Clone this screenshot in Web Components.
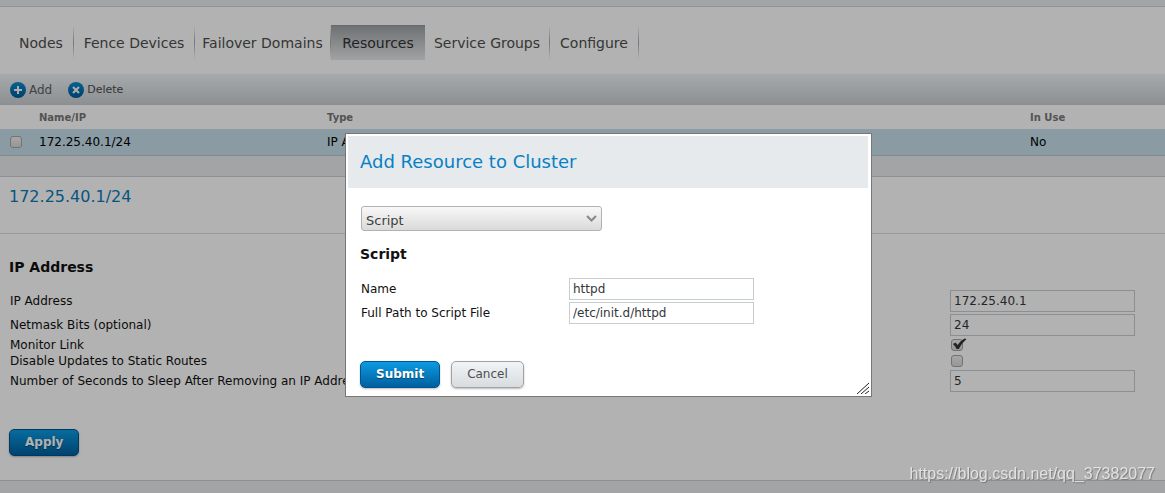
<!DOCTYPE html>
<html lang="en">
<head>
<meta charset="utf-8">
<title>Cluster Resources</title>
<style>
  html, body { height: 100%; }
  body { margin: 0; background: #fff; color: #111; font: 12px/16px "DejaVu Sans", sans-serif; }
</style>
</head>
<body>
<cluster-page>
  <tab-bar slot="nav">
    <nav-tab>Nodes</nav-tab>
    <nav-tab>Fence Devices</nav-tab>
    <nav-tab>Failover Domains</nav-tab>
    <nav-tab active>Resources</nav-tab>
    <nav-tab>Service Groups</nav-tab>
    <nav-tab>Configure</nav-tab>
  </tab-bar>
  <tool-bar slot="tools">
    <tool-button icon="add">Add</tool-button>
    <tool-button icon="delete">Delete</tool-button>
  </tool-bar>
  <resource-table slot="table"></resource-table>
  <resource-details slot="details">
    <span slot="title">172.25.40.1/24</span>
    <span slot="heading">IP Address</span>
    <text-field value="172.25.40.1">IP Address</text-field>
    <text-field value="24">Netmask Bits (optional)</text-field>
    <check-field checked>Monitor Link</check-field>
    <check-field>Disable Updates to Static Routes</check-field>
    <text-field value="5">Number of Seconds to Sleep After Removing an IP Address</text-field>
    <push-button slot="action" kind="primary">Apply</push-button>
  </resource-details>
</cluster-page>
<modal-layer>
  <resource-dialog>
    <span slot="title">Add Resource to Cluster</span>
    <select-box slot="type" label="Resource type" value="Script"></select-box>
    <span slot="heading">Script</span>
    <text-field value="httpd">Name</text-field>
    <text-field value="/etc/init.d/httpd">Full Path to Script File</text-field>
    <push-button slot="action" kind="primary">Submit</push-button>
    <push-button slot="action">Cancel</push-button>
  </resource-dialog>
</modal-layer>
<page-mark>https://blog.csdn.net/qq_37382077</page-mark>

<script>
const define = (name, render) => customElements.define(name, class extends HTMLElement {
  constructor() {
    super();
    this.attachShadow({ mode: "open" });
  }
  connectedCallback() {
    if (this.shadowRoot.firstChild) return;
    const t = document.createElement("template");
    t.innerHTML = render(this);
    this.shadowRoot.append(t.content.cloneNode(true));
  }
});

define("cluster-page", () => `
  <style>
    :host { display: flex; flex-direction: column; min-height: 100%; }
    .band { background: #e9ebee; box-sizing: border-box; }
    .top { height: 7px; border-bottom: 1px solid #cbd6dc; }
    .bottom { flex: 1; min-height: 12px; border-top: 1px solid #cbd0d3; }
  </style>
  <div class="band top"></div>
  <slot name="nav"></slot>
  <slot name="tools"></slot>
  <slot name="table"></slot>
  <slot name="details"></slot>
  <div class="band bottom"></div>`);

define("tab-bar", () => `
  <style>
    :host { display: block; padding: 18px 9px 14px; }
    nav { display: grid; grid-template-columns: 65px 121px 136px 94px 125px 89px; }
  </style>
  <nav aria-label="Cluster"><slot></slot></nav>`);

define("nav-tab", () => `
  <style>
    :host { display: flex; height: 35px; }
    a { flex: 1; text-align: center; font-size: 14px; line-height: 36px; color: #4e4e4e; text-decoration: none; white-space: nowrap; }
    i { width: 1px; background: linear-gradient(#fff, #a5aaac 50%, #fff); }
    :host([active]) a { color: #303233; background: linear-gradient(#9da1a4, #e6e9eb); box-shadow: inset 0 1px #94989a; }
    :host([active]) i { display: none; }
  </style>
  <a href="#"><slot></slot></a><i></i>`);

define("tool-bar", () => `
  <style>
    :host { display: flex; align-items: center; gap: 15px; height: 28px; padding: 2px 9px 0; border-bottom: 1px solid #c8cccf; background: linear-gradient(#eef4f7, #cbcfd2); }
  </style>
  <slot></slot>`);

define("tool-button", el => `
  <style>
    :host { display: block; }
    button { display: flex; align-items: center; gap: 2px; padding: 0; border: 0; background: none; font: 12px/18px "DejaVu Sans", sans-serif; color: #5c6062; }
    svg { display: block; width: 18px; height: 18px; }
    :host([icon=delete]) button { font-size: 11px; color: #4a4d4f; }
  </style>
  <button type="button">
    <svg viewBox="0 0 18 18" aria-hidden="true">
      <defs><linearGradient id="g" x2="0" y2="1"><stop stop-color="#0b8cce"/><stop offset="1" stop-color="#005a98"/></linearGradient></defs>
      <circle cx="9" cy="9" r="8" fill="url(#g)"/>
      <path d="${el.getAttribute("icon") === "add" ? "M9 5v8M5 9h8" : "M6 6l6 6M12 6l-6 6"}" stroke="#f5f8fa" stroke-width="2"/>
    </svg>
    <slot></slot>
  </button>`);

const tickBox = `
  .tick { position: relative; display: block; width: 12px; height: 12px; }
  .tick input { appearance: none; display: block; box-sizing: border-box; width: 12px; height: 12px; margin: 0; border: 1px solid #a4a4a4; border-radius: 3px; background: linear-gradient(#efefef, #d8d8d8); }
  .tick svg { position: absolute; left: 1px; top: -1px; display: none; pointer-events: none; }
  .tick input:checked + svg { display: block; }`;

define("resource-table", () => `
  <style>
    :host { display: block; border-bottom: 1px solid #cbd0d3; background: #e9ebee; padding-bottom: 20px; }
    table { width: 100%; border-collapse: separate; border-spacing: 0; table-layout: fixed; background: #fff; }
    th, td { padding: 0; text-align: left; }
    th { height: 22px; padding-top: 2px; font-size: 10px; line-height: 16px; color: #777; }
    td { height: 26px; background: #c6deeb; border-bottom: 1px solid #bac5cb; color: #000; }
    .pick { width: 39px; } .name { width: 288px; } .use { width: 135px; }
    .tick { margin-left: 10px; }
    ${tickBox}
  </style>
  <table>
    <thead><tr><th class="pick"></th><th class="name">Name/IP</th><th>Type</th><th class="use">In Use</th></tr></thead>
    <tbody><tr>
      <td><label class="tick"><input type="checkbox" aria-label="Select 172.25.40.1/24"></label></td>
      <td>172.25.40.1/24</td><td>IP Address</td><td>No</td>
    </tr></tbody>
  </table>`);

define("resource-details", () => `
  <style>
    :host { display: block; }
    header { height: 57px; box-sizing: border-box; padding: 10px 9px 0; border-bottom: 1px solid #dadfe1; }
    h1 { margin: 0; font-size: 16px; line-height: 20px; font-weight: normal; color: #0b7ab8; }
    h2 { margin: 0; padding: 24px 9px 13px; font-size: 14px; line-height: 18px; color: #111; }
    form { display: flex; flex-direction: column; padding: 0 30px 0 10px; }
    footer { padding: 36px 9px 24px; }
  </style>
  <header><h1><slot name="title"></slot></h1></header>
  <h2><slot name="heading"></slot></h2>
  <form><slot></slot></form>
  <footer><slot name="action"></slot></footer>`);

define("text-field", el => `
  <style>
    :host { display: grid; grid-template-columns: var(--cols, 1fr 185px); align-items: center; height: 24px; }
    input { box-sizing: border-box; width: 185px; height: 22px; margin: 0; padding: 0 3px; border: 1px solid #c8cdd0; border-radius: 0; background: transparent; font: 12px/16px "DejaVu Sans", sans-serif; color: #333739; }
    label { white-space: nowrap; }
  </style>
  <label for="f"><slot></slot></label>
  <input id="f" type="text" value="${el.getAttribute("value")}">`);

define("check-field", el => `
  <style>
    :host { display: grid; grid-template-columns: 1fr 184px; align-items: center; height: 16px; }
    ${tickBox}
  </style>
  <label for="c"><slot></slot></label>
  <span class="tick">
    <input id="c" type="checkbox" ${el.hasAttribute("checked") ? "checked" : ""}>
    <svg width="15" height="12" viewBox="0 0 15 12" aria-hidden="true"><path d="M1 6L3.500 4.500L5.500 7Q8.500 2.500 12.500 .5L14.500 1Q9.500 5.500 6.800 11H4.500Q3.500 8.500 1 6Z" fill="#303638"/></svg>
  </span>`);

define("push-button", () => `
  <style>
    :host { display: inline-block; }
    button { display: block; box-sizing: border-box; height: 27px; padding: 0 15px 2px; border: 1px solid #a0a3a6; border-radius: 5px; background: linear-gradient(#f1f4f6, #d9dcdf); box-shadow: 0 1px 2px #0004; font: 12px/22px "DejaVu Sans", sans-serif; color: #4c4f52; }
    :host([kind=primary]) button { border-color: #00548f; background: linear-gradient(#0c9be2, #005f9f); font-weight: bold; color: #fff; text-shadow: 0 1px 1px #0006; }
  </style>
  <button type="button"><slot></slot></button>`);

define("modal-layer", () => `
  <style>
    :host { position: fixed; inset: 0; background: rgba(0, 0, 0, .3); }
    div { position: absolute; left: 345px; top: 133px; }
  </style>
  <div><slot></slot></div>`);

define("resource-dialog", () => `
  <style>
    :host { display: block; position: relative; box-sizing: border-box; width: 527px; padding: 2px 3px 8px 2px; border: 1px solid #777; background: #fff; --cols: 208px 185px; }
    h1 { margin: 0; padding: 16px 12px; background: #e6eaed; font-size: 18px; line-height: 20px; font-weight: normal; color: #0880c4; }
    .body { padding: 18px 12px 0; }
    h2 { margin: 0; padding: 14px 0; font-size: 14px; line-height: 18px; color: #111; }
    form { padding-left: 1px; }
    footer { display: flex; gap: 11px; padding-top: 36px; }
    svg { position: absolute; right: 2px; bottom: 2px; }
  </style>
  <section role="dialog" aria-label="Add Resource to Cluster">
    <h1><slot name="title"></slot></h1>
    <div class="body">
      <slot name="type"></slot>
      <h2><slot name="heading"></slot></h2>
      <form><slot></slot></form>
      <footer><slot name="action"></slot></footer>
    </div>
  </section>
  <svg width="12" height="12" viewBox="0 0 12 12" aria-hidden="true"><path d="M0 12L12 1M4 12L12 5M8 12L12 9" stroke="#222" fill="none"/></svg>`);

define("select-box", el => `
  <style>
    :host { display: block; position: relative; width: 241px; margin-left: 1px; }
    select { appearance: none; display: block; box-sizing: border-box; width: 100%; height: 25px; margin: 0; padding: 4px 20px 0 4px; border: 1px solid #b2b2b2; border-radius: 3px; background: linear-gradient(#f8f8f8, #dadada); font: 13px/18px "DejaVu Sans", sans-serif; color: #3c3f41; }
    svg { position: absolute; right: 5px; top: 9px; pointer-events: none; }
  </style>
  <select aria-label="${el.getAttribute("label")}"><option>${el.getAttribute("value")}</option></select>
  <svg width="11" height="8" viewBox="0 0 11 8" aria-hidden="true"><path d="M1 1L5.500 5.500L10 1" fill="none" stroke="#888" stroke-width="2"/></svg>`);

define("page-mark", () => `
  <style>
    :host { position: fixed; right: 10px; bottom: 9px; font: 16px/20px "Liberation Sans", sans-serif; color: #e2e2e2; text-shadow: 1px 1px 1px #777; }
  </style>
  <slot></slot>`);
</script>
</body>
</html>
